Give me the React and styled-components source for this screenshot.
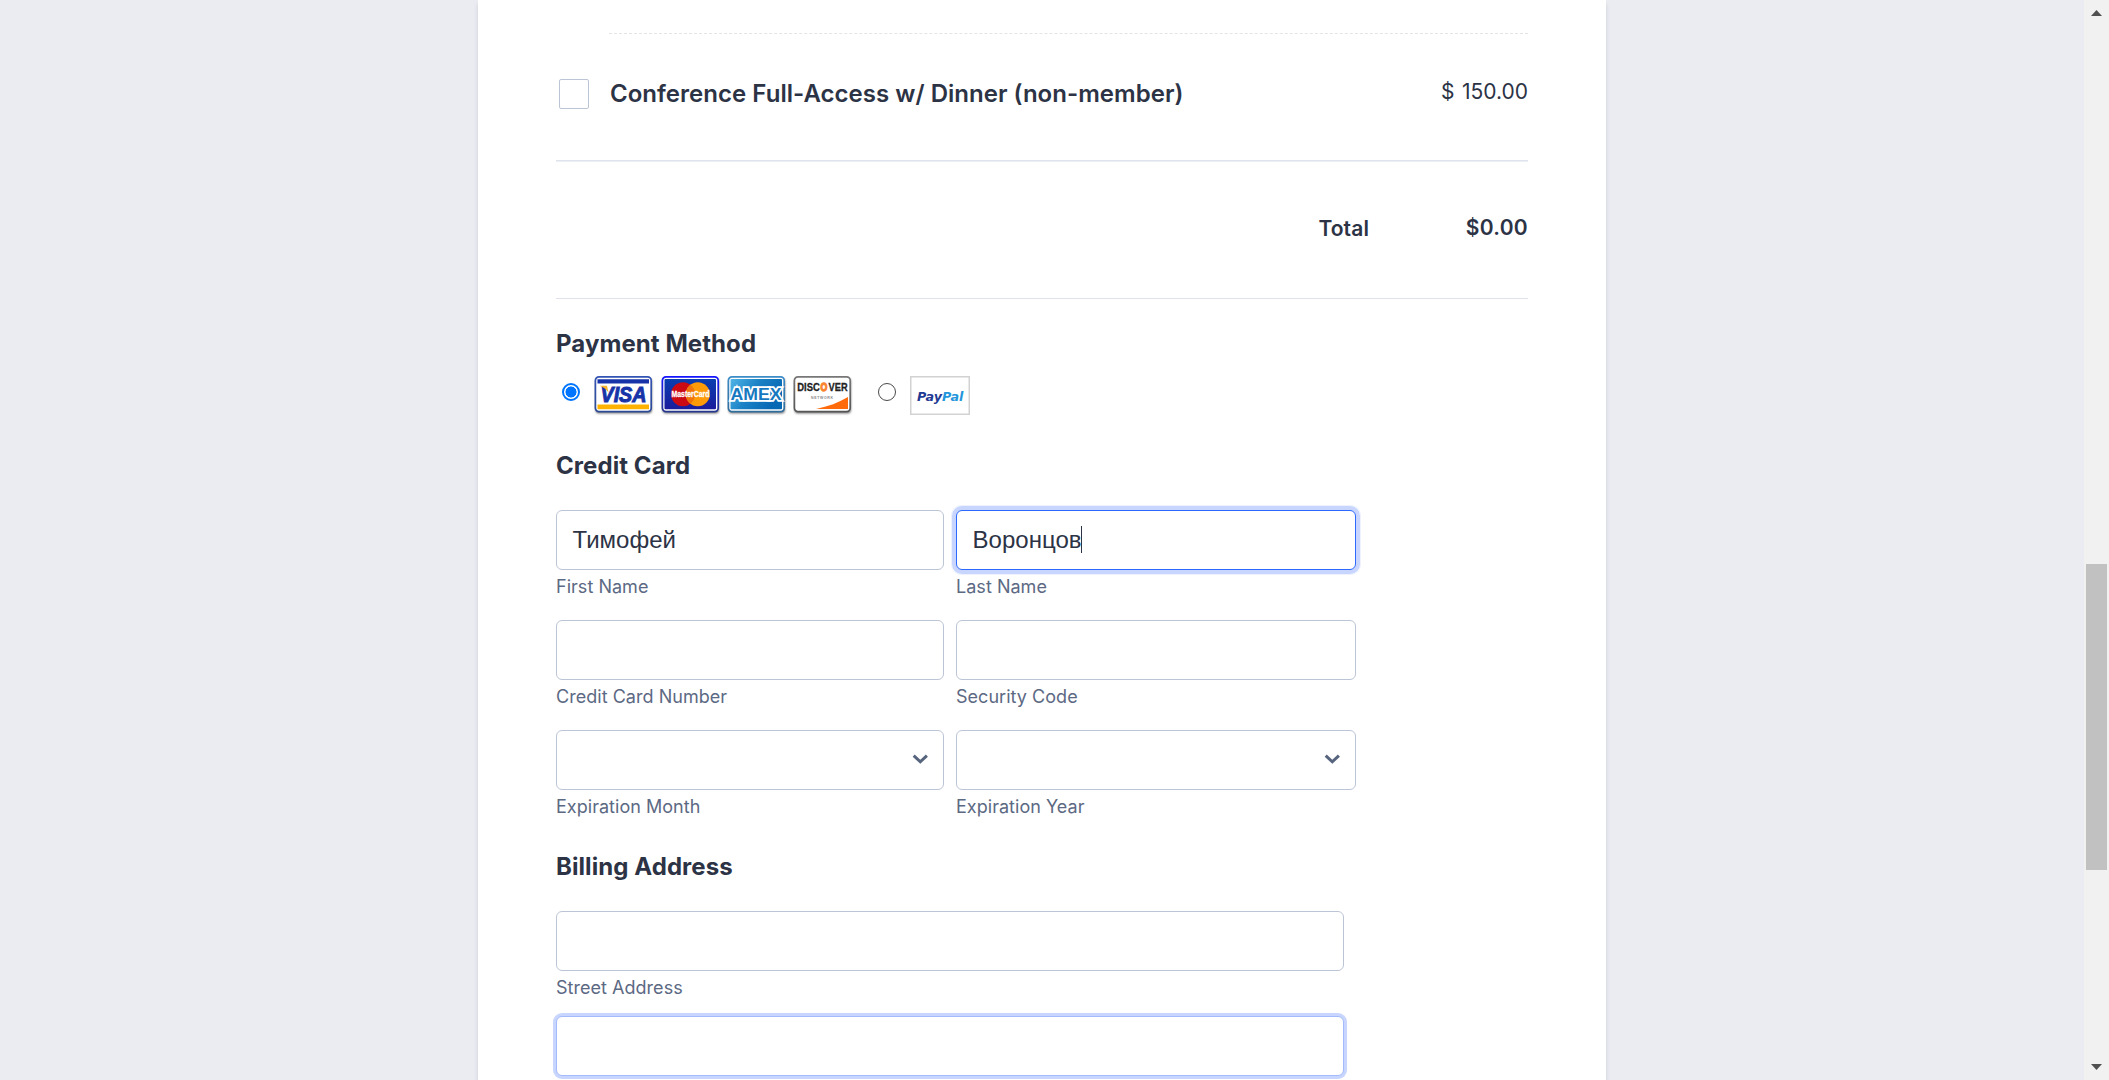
import React from 'react';
import styled, { createGlobalStyle } from 'styled-components';

const GlobalStyle = createGlobalStyle`
  *, *::before, *::after { box-sizing: border-box; }
  body { margin: 0; background: #ebecf2; }
`;

const Screen = styled.div`
  display: flex;
  height: 1080px;
  overflow: hidden;
  font-family: Inter, sans-serif;
  color: #2c3345;
`;

const Page = styled.main`
  flex: 1;
  display: flex;
  justify-content: center;
  overflow: hidden;
`;

const FormCard = styled.form`
  width: 1128px;
  height: 1100px;
  padding: 33px 78px 0;
  background: #fff;
  box-shadow: 0 4px 4px rgba(87, 100, 126, 0.21);
`;

const DashedRule = styled.div`
  margin-left: 53px;
  border-top: 1px dashed #e4e4e4;
`;

const ProductRow = styled.div`
  display: flex;
  align-items: flex-start;
  height: 126px;
  padding: 45px 0 0 3px;
`;

const Checkbox = styled.span`
  width: 30px;
  height: 30px;
  border: 1px solid #bcc5d5;
  border-radius: 2px;
  background: #fff;
`;

const ProductName = styled.span`
  flex: 1;
  margin-left: 21px;
  font-size: 24px;
  line-height: 29px;
  font-weight: 600;
  letter-spacing: 0.03px;
`;

const Price = styled.span`
  font-size: 21px;
  line-height: 25px;
  font-weight: 400;
  word-spacing: 1.5px;
  white-space: pre;
`;

const Rule = styled.div`
  height: ${(p) => p.$size}px;
  background: ${(p) => (p.$size > 1 ? 'linear-gradient(#dfe3ec 50%, #eceff4 50%)' : '#dfe2ea')};
`;

const TotalRow = styled.div`
  display: flex;
  justify-content: flex-end;
  height: 136px;
  padding-top: 53px;
  font-size: 21px;
  line-height: 25px;
`;

const TotalLabel = styled.span`
  padding-top: 1px;
  font-weight: 600;
  letter-spacing: 0.1px;
`;

const TotalAmount = styled.span`
  width: 159px;
  text-align: right;
  font-weight: 600;
  letter-spacing: 0.3px;
`;

const Heading = styled.h2`
  margin: ${(p) => p.$top}px 0 0;
  font-size: 24px;
  line-height: 29px;
  font-weight: 700;
  letter-spacing: 0.07px;
`;

const PaymentOptions = styled.div`
  display: flex;
  height: 39px;
  margin: 18px 0 0 6px;
`;

const Radio = styled.span`
  width: 18px;
  height: 18px;
  margin: 7px ${(p) => p.$gap}px 0 0;
  border-radius: 50%;
  border: ${(p) => (p.$checked ? '2px solid #0075ff' : '1px solid #4a4a4a')};
  background: #fff;
  ${(p) => p.$checked && 'background: radial-gradient(circle, #0075ff 5.2px, transparent 5.8px);'}
`;

const CardLogos = styled.div`
  display: flex;
  gap: 5.4px;
  margin: 0 23.6px 0 0;
`;

const Logo = styled.svg`
  display: block;
  flex: none;
`;

const FieldRow = styled.div`
  display: flex;
  gap: 12px;
  margin-top: ${(p) => p.$top}px;
`;

const Field = styled.label`
  display: flex;
  flex-direction: column;
  width: ${(p) => p.$width}px;
`;

const ring = {
  focus: 'border-color: #2e69ff; box-shadow: 0 0 0 4px #c8d6ff, 0 0 0 5px #eef2ff;',
  hover: 'border-color: #a3bbfa; box-shadow: 0 0 0 3px #c8d6ff;',
  none: '',
};

const Control = styled.span`
  display: flex;
  align-items: center;
  height: 60px;
  padding: 0 15px 2px;
  border: 1px solid #bcc5d5;
  border-radius: 6px;
  background: #fff;
  font-family: "Liberation Sans", Arial, sans-serif;
  font-size: 24px;
  line-height: 27px;
  ${(p) => ring[p.$state || 'none']}
`;

const Value = styled.span`
  padding-left: 0.6px;
`;

const Caret = styled.span`
  width: 1px;
  height: 27px;
  background: #2c3345;
`;

const Chevron = styled.svg`
  display: block;
  margin-left: auto;
`;

const Hint = styled.span`
  margin-top: 6px;
  font-size: 18px;
  line-height: 21px;
  font-weight: 400;
  letter-spacing: 0.03px;
  color: #5c6983;
`;

const Scrollbar = styled.aside`
  display: flex;
  flex-direction: column;
  width: 25px;
  background: #f1f1f1;
`;

const ScrollArrow = styled.svg`
  display: block;
  flex: none;
`;

const Track = styled.div`
  flex: 1;
  padding: 540px 2px 0;
`;

const Thumb = styled.div`
  height: 306px;
  background: #c1c1c1;
`;

function TextField({ label, width, value, state }) {
  return (
    <Field $width={width}>
      <Control $state={state}>
        {value && <Value>{value}</Value>}
        {state === 'focus' && <Caret />}
      </Control>
      {label && <Hint>{label}</Hint>}
    </Field>
  );
}

function SelectField({ label, width }) {
  return (
    <Field $width={width}>
      <Control>
        <Chevron width="16" height="10" viewBox="0 0 16 10">
          <path d="M1.700 1.700L8.300 7.800L14.900 1.700" fill="none" stroke="#57647e" strokeWidth="3" />
        </Chevron>
      </Control>
      <Hint>{label}</Hint>
    </Field>
  );
}

function CardFrame({ id, edge, children }) {
  return (
    <Logo width="61" height="40" viewBox="0 0 61 40">
      <defs>
        <linearGradient id={`${id}-edge`} x1="0" y1="0" x2="0" y2="1">
          <stop offset="0" stopColor={edge[0]} />
          <stop offset="1" stopColor={edge[1]} />
        </linearGradient>
        <filter id={`${id}-shadow`} x="-10%" y="-10%" width="120%" height="130%">
          <feGaussianBlur stdDeviation="0.9" />
        </filter>
      </defs>
      <rect x="1.500" y="2" width="56.500" height="35.500" rx="3.500" fill="#000" opacity="0.5" filter={`url(#${id}-shadow)`} />
      <rect x="1.400" y="0.900" width="55.800" height="34.800" rx="3.600" fill="#fff" stroke={`url(#${id}-edge)`} strokeWidth="1.700" />
      {children}
    </Logo>
  );
}

function VisaLogo() {
  return (
    <CardFrame id="visa" edge={['#3454b4', '#2c4a94']}>
      <path d="M3.500 3.200h51.500v4.200H3.500z" fill="#1733a8" />
      <path d="M3.500 28.600h51.500v4.600H3.500z" fill="#ffb300" />
      <text x="6.500" y="26" fontFamily="Liberation Sans, Arial, sans-serif" fontWeight="700" fontStyle="italic" fontSize="22" fill="#1733a8" stroke="#1733a8" strokeWidth="1" textLength="46" lengthAdjust="spacingAndGlyphs">VISA</text>
      <path d="M5.500 9.800h7.500l1.600 7c-2-3-5-5.900-9.100-7z" fill="#f5b42c" />
    </CardFrame>
  );
}

function MasterCardLogo() {
  return (
    <CardFrame id="mc" edge={['#1414ff', '#26368c']}>
      <defs>
        <linearGradient id="mc-fill" x1="0" y1="0" x2="0" y2="1">
          <stop offset="0" stopColor="#0a3fb0" />
          <stop offset="1" stopColor="#1c1c9c" />
        </linearGradient>
      </defs>
      <rect x="3.500" y="3" width="51.500" height="30.300" rx="1" fill="url(#mc-fill)" />
      <circle cx="22" cy="18.200" r="12" fill="#cc0a14" />
      <circle cx="36.800" cy="18.200" r="12" fill="#ff9a08" />
      <path d="M29.400 8.750a12 12 0 0 0 0 18.900a12 12 0 0 0 0-18.900z" fill="#f0740c" />
      <text x="10.500" y="20.900" fontFamily="Liberation Sans, Arial, sans-serif" fontWeight="700" fontSize="8.500" fill="#fff" stroke="#fff" strokeWidth="0.3" textLength="38" lengthAdjust="spacingAndGlyphs">MasterCard</text>
    </CardFrame>
  );
}

function AmexLogo() {
  return (
    <CardFrame id="amex" edge={['#3c8cc8', '#2f6d9c']}>
      <defs>
        <linearGradient id="amex-fill" x1="0" y1="0" x2="1" y2="0.4">
          <stop offset="0" stopColor="#50b4e6" />
          <stop offset="0.5" stopColor="#1b82c6" />
          <stop offset="1" stopColor="#0768b4" />
        </linearGradient>
      </defs>
      <rect x="3.500" y="3" width="51.500" height="30.300" rx="1" fill="url(#amex-fill)" />
      <text x="3.500" y="23.800" fontFamily="Liberation Sans, Arial, sans-serif" fontWeight="700" fontSize="16.500" fill="#1679c0" stroke="#fff" strokeWidth="3.400" paintOrder="stroke" textLength="51" lengthAdjust="spacingAndGlyphs">AMEX</text>
    </CardFrame>
  );
}

const DiscoverWord = styled.text`
  font: 700 11.5px "Liberation Sans", Arial, sans-serif;
  fill: ${(p) => p.$color};
  stroke: ${(p) => p.$color};
  stroke-width: ${(p) => p.$weight}px;
`;

function DiscoverLogo() {
  return (
    <CardFrame id="disc" edge={['#777', '#555']}>
      <path d="M23 33C35 30.500 46 26.500 55 21v12z" fill="#ff6a0a" />
      <DiscoverWord x="4.300" y="15.300" $color="#222" $weight={0.3} textLength="22.500" lengthAdjust="spacingAndGlyphs">DISC</DiscoverWord>
      <DiscoverWord x="27.600" y="15.300" $color="#f98532" $weight={1.3} textLength="6.800" lengthAdjust="spacingAndGlyphs">O</DiscoverWord>
      <DiscoverWord x="35.600" y="15.300" $color="#222" $weight={0.3} textLength="19" lengthAdjust="spacingAndGlyphs">VER</DiscoverWord>
      <text x="18" y="22.600" fontFamily="Liberation Sans, Arial, sans-serif" fontWeight="700" fontSize="3.500" fill="#888" textLength="22" lengthAdjust="spacing">NETWORK</text>
    </CardFrame>
  );
}

function PayPalLogo() {
  return (
    <Logo width="60" height="39" viewBox="0 0 60 39">
      <rect x="0.750" y="0.750" width="58.500" height="37.500" fill="#fff" stroke="#d2d2d2" strokeWidth="1.500" />
      <text x="7" y="24.800" fontFamily="DejaVu Sans, Verdana, sans-serif" fontWeight="700" fontStyle="italic" fontSize="13" fill="#1f3a93" textLength="46.500" lengthAdjust="spacingAndGlyphs">
        Pay<tspan fill="#2496dc">Pal</tspan>
      </text>
    </Logo>
  );
}

export default function App() {
  return (
    <>
      <GlobalStyle />
      <Screen>
        <Page>
          <FormCard>
            <DashedRule />
            <ProductRow>
              <Checkbox />
              <ProductName>Conference Full-Access w/ Dinner (non-member)</ProductName>
              <Price>$ 150.00</Price>
            </ProductRow>
            <Rule $size={2} />
            <TotalRow>
              <TotalLabel>Total</TotalLabel>
              <TotalAmount>$0.00</TotalAmount>
            </TotalRow>
            <Rule $size={1} />

            <Heading $top={30}>Payment Method</Heading>
            <PaymentOptions>
              <Radio $checked $gap={14.2} />
              <CardLogos>
                <VisaLogo />
                <MasterCardLogo />
                <AmexLogo />
                <DiscoverLogo />
              </CardLogos>
              <Radio $gap={14} />
              <PayPalLogo />
            </PaymentOptions>

            <Heading $top={36}>Credit Card</Heading>
            <FieldRow $top={30}>
              <TextField width={388} label="First Name" value="Тимофей" />
              <TextField width={400} label="Last Name" value="Воронцов" state="focus" />
            </FieldRow>
            <FieldRow $top={23}>
              <TextField width={388} label="Credit Card Number" />
              <TextField width={400} label="Security Code" />
            </FieldRow>
            <FieldRow $top={23}>
              <SelectField width={388} label="Expiration Month" />
              <SelectField width={400} label="Expiration Year" />
            </FieldRow>

            <Heading $top={35}>Billing Address</Heading>
            <FieldRow $top={30}>
              <TextField width={788} label="Street Address" />
            </FieldRow>
            <FieldRow $top={18}>
              <TextField width={788} state="hover" />
            </FieldRow>
          </FormCard>
        </Page>
        <Scrollbar>
          <ScrollArrow width="25" height="24" viewBox="0 0 25 24">
            <path d="M7 16L12.500 10L18 16z" fill="#505050" />
          </ScrollArrow>
          <Track>
            <Thumb />
          </Track>
          <ScrollArrow width="25" height="24" viewBox="0 0 25 24">
            <path d="M7 8L12.500 14L18 8z" fill="#505050" />
          </ScrollArrow>
        </Scrollbar>
      </Screen>
    </>
  );
}
